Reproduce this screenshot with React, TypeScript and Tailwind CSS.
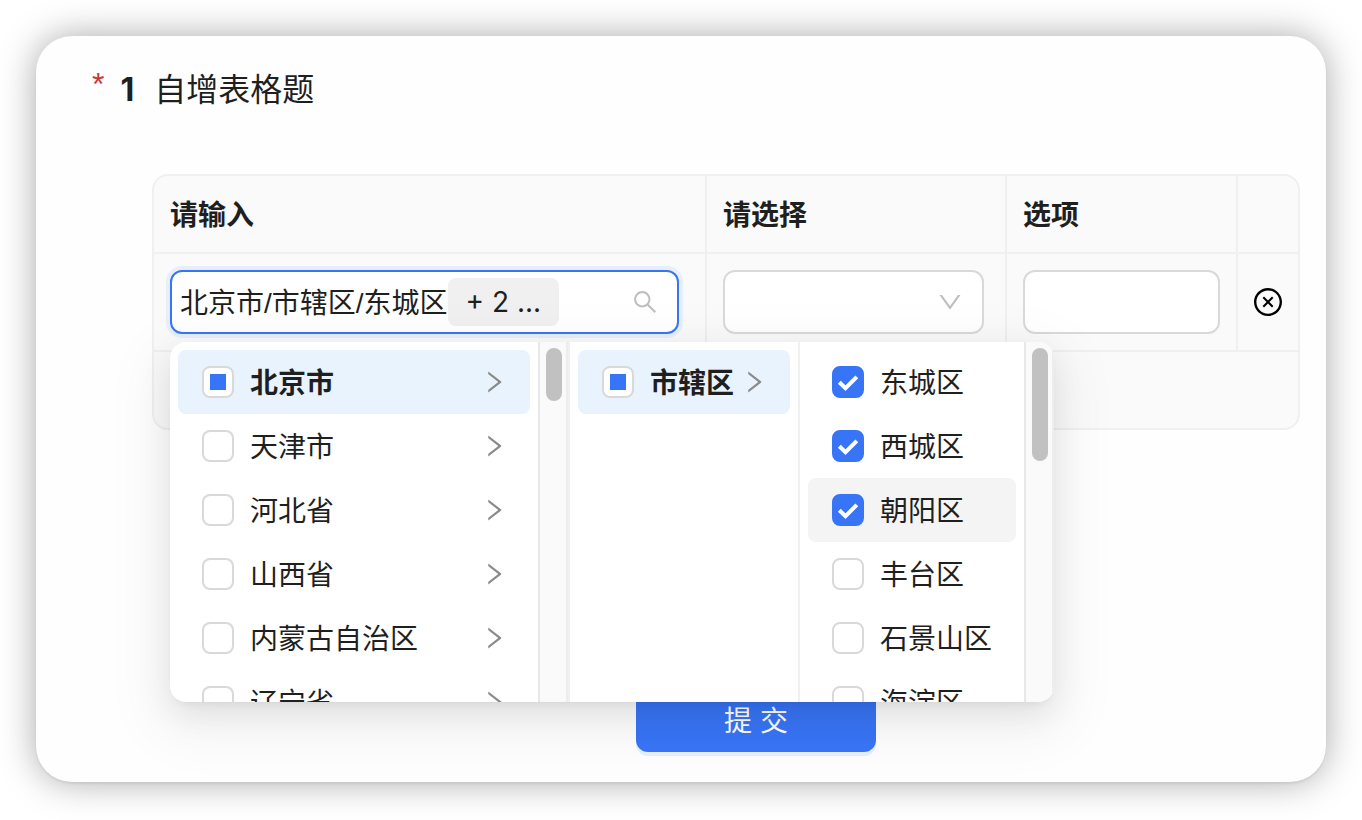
import { useEffect, useRef, useState } from "react";
import clsx from "clsx";
import {
  AiOutlineCloseCircle,
  AiOutlineDown,
  AiOutlineRight,
  AiOutlineSearch,
} from "react-icons/ai";

type Option = {
  label: string;
  state?: "checked" | "partial";
  active?: boolean;
  hovered?: boolean;
};

const provinces: Option[] = [
  { label: "北京市", state: "partial", active: true },
  { label: "天津市" },
  { label: "河北省" },
  { label: "山西省" },
  { label: "内蒙古自治区" },
  { label: "辽宁省" },
];

const cities: Option[] = [{ label: "市辖区", state: "partial", active: true }];

const districts: Option[] = [
  { label: "东城区", state: "checked" },
  { label: "西城区", state: "checked" },
  { label: "朝阳区", state: "checked", hovered: true },
  { label: "丰台区" },
  { label: "石景山区" },
  { label: "海淀区" },
];

function Checkbox({ id, state }: { id: string; state?: Option["state"] }) {
  const ref = useRef<HTMLInputElement>(null);
  const [checked, setChecked] = useState(state === "checked");

  useEffect(() => {
    if (ref.current) ref.current.indeterminate = state === "partial";
  }, [state]);

  return (
    <span className="grid size-8 shrink-0 place-items-center">
      <input
        ref={ref}
        id={id}
        type="checkbox"
        checked={checked}
        onChange={(e) => setChecked(e.target.checked)}
        className="peer col-start-1 row-start-1 size-8 appearance-none rounded-lg border-2 border-[#d9d9d9] bg-white checked:border-[#3875f6] checked:bg-[#3875f6]"
      />
      {/* half-selected mark */}
      <span className="pointer-events-none col-start-1 row-start-1 hidden size-4 bg-[#3875f6] peer-indeterminate:block" />
      <svg
        viewBox="0 0 32 32"
        className="pointer-events-none col-start-1 row-start-1 hidden size-8 fill-none stroke-white stroke-4 peer-checked:block"
      >
        <path d="M7.3 16.2 L13.5 22.2 L24.8 10.8" />
      </svg>
    </span>
  );
}

function Menu({
  name,
  options,
  expandable,
}: {
  name: string;
  options: Option[];
  expandable?: boolean;
}) {
  return (
    <ul className="min-w-0 flex-1 overflow-hidden p-2">
      {options.map((option, i) => (
        <li
          key={option.label}
          className={clsx(
            "flex h-16 items-center rounded-lg pl-6 pr-[22px]",
            option.active && "bg-[#e8f3fe] font-semibold",
            option.hovered && "bg-[#f4f4f4]"
          )}
        >
          <Checkbox id={`${name}-${i}`} state={option.state} />
          <label
            htmlFor={`${name}-${i}`}
            className="ml-4 flex-1 whitespace-nowrap pt-[3px]"
          >
            {option.label}
          </label>
          {expandable && (
            <AiOutlineRight className="size-7 shrink-0 text-[#8a8a8a]" />
          )}
        </li>
      ))}
    </ul>
  );
}

function ScrollTrack({ thumbClass }: { thumbClass: string }) {
  return (
    <div className="w-[30px] shrink-0 border-x-2 border-l-[#e8e8e8] border-r-[#ededed] bg-[#fafafa] px-[6px] pt-[6px]">
      <div className={clsx("w-4 rounded-full bg-[#c1c1c1]", thumbClass)} />
    </div>
  );
}

function Dropdown() {
  return (
    <div className="absolute left-0 top-full z-10 mt-2 flex h-[360px] overflow-hidden rounded-2xl bg-white shadow-[0_12px_32px_0_rgba(0,0,0,0.08),0_6px_12px_-8px_rgba(0,0,0,0.12),0_18px_56px_16px_rgba(0,0,0,0.05)]">
      <div className="flex w-[400px] border-r-2 border-[#f0f0f0]">
        <Menu name="province" options={provinces} expandable />
        <ScrollTrack thumbClass="h-[53px]" />
      </div>
      <div className="flex w-[230px] border-r-2 border-[#f0f0f0]">
        <Menu name="city" options={cities} expandable />
      </div>
      <div className="flex w-[254px]">
        <Menu name="district" options={districts} />
        <ScrollTrack thumbClass="h-[113px]" />
      </div>
    </div>
  );
}

function AreaCascader() {
  return (
    <div className="relative">
      <div className="flex h-16 items-center rounded-xl border-2 border-[#3875f6] bg-white pl-2 pr-[18px] shadow-[0_0_0_4px_#e6effa]">
        <span className="whitespace-nowrap pt-[3px]">北京市/市辖区/东城区</span>
        <span className="flex h-12 shrink-0 items-center rounded-lg bg-[#f0f0f0] px-[18px] font-['Inter',sans-serif] whitespace-pre">
          + 2 ...
        </span>
        <input
          aria-label="请输入"
          className="min-w-0 flex-1 bg-transparent outline-none"
        />
        <AiOutlineSearch className="size-7 shrink-0 text-[#bfbfbf]" />
      </div>
      <Dropdown />
    </div>
  );
}

function IncrementTable() {
  return (
    <div className="ml-[116px] mr-[26px] mt-[61px] rounded-2xl border-2 border-[#f0f0f0] bg-[#fafafa]">
      <table className="w-full table-fixed border-separate border-spacing-0">
        <colgroup>
          <col />
          <col className="w-[300px]" />
          <col className="w-[231px]" />
          <col className="w-[60px]" />
        </colgroup>
        <thead>
          <tr className="h-[78px] text-left">
            <th className="border-b-2 border-r-2 border-[#f0f0f0] px-4 pt-[3px] font-semibold">
              请输入
            </th>
            <th className="border-b-2 border-r-2 border-[#f0f0f0] px-4 pt-[3px] font-semibold">
              请选择
            </th>
            <th className="border-b-2 border-r-2 border-[#f0f0f0] px-4 pt-[3px] font-semibold">
              选项
            </th>
            <td className="border-b-2 border-[#f0f0f0]" />
          </tr>
        </thead>
        <tbody>
          <tr className="h-[98px]">
            <td className="border-b-2 border-r-2 border-[#f0f0f0] pl-4 pr-[26px]">
              <AreaCascader />
            </td>
            <td className="border-b-2 border-r-2 border-[#f0f0f0] pl-4 pr-[21px]">
              <div className="grid items-center">
                <select
                  aria-label="请选择"
                  className="col-start-1 row-start-1 h-16 w-full appearance-none rounded-xl border-2 border-[#d9d9d9] bg-white px-5"
                >
                  <option value=""></option>
                </select>
                <AiOutlineDown className="pointer-events-none col-start-1 row-start-1 mr-5 size-7 justify-self-end text-[#bfbfbf]" />
              </div>
            </td>
            <td className="border-b-2 border-r-2 border-[#f0f0f0] px-4">
              <input
                aria-label="选项"
                className="block h-16 w-full rounded-xl border-2 border-[#d9d9d9] bg-white px-5 outline-none"
              />
            </td>
            <td className="border-b-2 border-[#f0f0f0]">
              <button
                type="button"
                aria-label="删除"
                className="mx-auto block text-black"
              >
                <AiOutlineCloseCircle className="size-8" />
              </button>
            </td>
          </tr>
          <tr className="h-[76px]">
            <td colSpan={4} />
          </tr>
        </tbody>
      </table>
    </div>
  );
}

export default function App() {
  return (
    <main className="min-h-screen bg-white p-9 font-['Liberation_Sans','Noto_Sans_CJK_SC',sans-serif] text-[28px] leading-[44px] text-[#1f1f1f]">
      <form
        className="rounded-[36px] bg-[#fefefe] pb-[30px] pt-[29px] shadow-[0_0_36px_rgba(0,0,0,0.34),0_2px_2px_rgba(0,0,0,0.06)]"
        onSubmit={(e) => e.preventDefault()}
      >
        <h1 className="flex h-12 items-center pl-14 text-[32px] leading-[48px]">
          <span className="pb-2.5 text-[#c8372d]">*</span>
          <span className="ml-4 pt-0.5 font-['Inter',sans-serif] font-bold">
            1
          </span>
          <span className="ml-5 pt-0.5">自增表格题</span>
        </h1>

        <IncrementTable />

        <div className="mt-[258px] flex justify-center pl-[150px]">
          <button
            type="submit"
            className="h-16 w-60 rounded-xl bg-[#3875f6] pt-[3px] text-white shadow-[0_4px_0_#e6effc]"
          >
            提 交
          </button>
        </div>
      </form>
    </main>
  );
}
